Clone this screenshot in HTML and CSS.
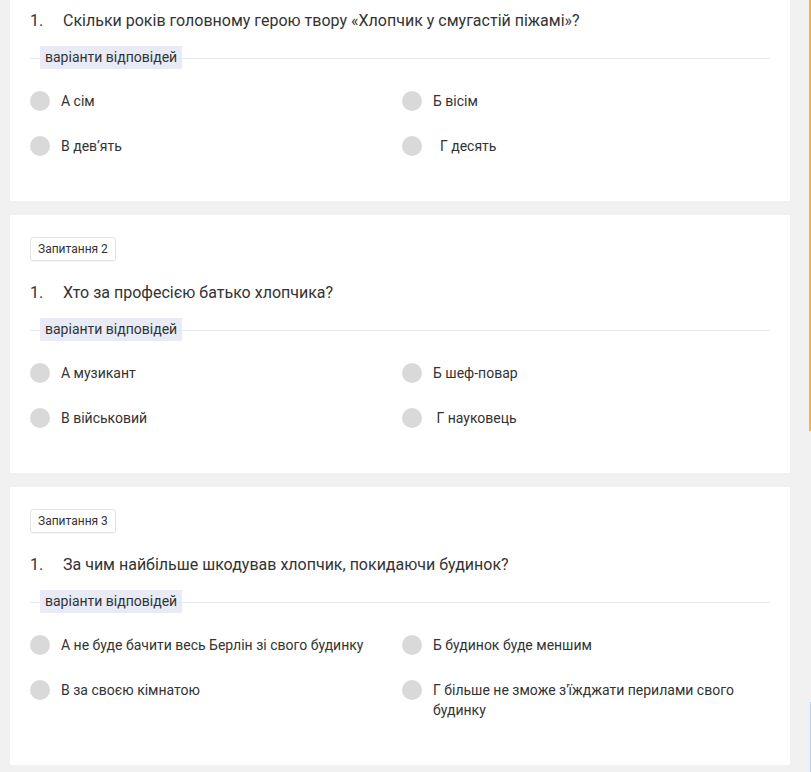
FILE: index.html
```html
<!DOCTYPE html>
<html lang="uk">
<head>
<meta charset="utf-8">
<title>Тест</title>
<link rel="stylesheet" href="styles.css">
</head>
<body>
<div class="edge edge-orange"></div>
<div class="edge edge-blue"></div>
<main class="quiz">
  <section class="card">
    <div class="badge">Запитання 1</div>
    <div class="question"><span class="num">1.</span><span>Скільки років головному герою твору «Хлопчик у смугастій піжамі»?</span></div>
    <div class="divider"><span class="label">варіанти відповідей</span></div>
    <div class="options">
      <label class="option"><span class="radio"></span><span class="text">А сім</span></label>
      <label class="option"><span class="radio"></span><span class="text">Б вісім</span></label>
      <label class="option"><span class="radio"></span><span class="text">В дев’ять</span></label>
      <label class="option"><span class="radio"></span><span class="text">&nbsp; Г десять</span></label>
    </div>
  </section>
  <section class="card">
    <div class="badge">Запитання 2</div>
    <div class="question"><span class="num">1.</span><span>Хто за професією батько хлопчика?</span></div>
    <div class="divider"><span class="label">варіанти відповідей</span></div>
    <div class="options">
      <label class="option"><span class="radio"></span><span class="text">А музикант</span></label>
      <label class="option"><span class="radio"></span><span class="text">Б шеф-повар</span></label>
      <label class="option"><span class="radio"></span><span class="text">В військовий</span></label>
      <label class="option"><span class="radio"></span><span class="text">&nbsp;Г науковець</span></label>
    </div>
  </section>
  <section class="card">
    <div class="badge">Запитання 3</div>
    <div class="question"><span class="num">1.</span><span>За чим найбільше шкодував хлопчик, покидаючи будинок?</span></div>
    <div class="divider"><span class="label">варіанти відповідей</span></div>
    <div class="options">
      <label class="option"><span class="radio"></span><span class="text">А не буде бачити весь Берлін зі свого будинку</span></label>
      <label class="option"><span class="radio"></span><span class="text">Б будинок буде меншим</span></label>
      <label class="option"><span class="radio"></span><span class="text">В за своєю кімнатою</span></label>
      <label class="option"><span class="radio"></span><span class="text">Г більше не зможе з'їжджати перилами свого будинку</span></label>
    </div>
  </section>
</main>
</body>
</html>
```
FILE: styles.css
```css
html, body {
  margin: 0;
  padding: 0;
}
body {
  background: #f1f1f1;
  font-family: Roboto, "Liberation Sans", Arial, sans-serif;
  color: #333;
  overflow: hidden;
}
.quiz {
  display: flex;
  flex-direction: column;
  gap: 14px;
  width: 780px;
  margin: -57px 0 0 10px;
}
.card {
  background: #fff;
  padding: 22px 20px 45px;
}
.badge {
  display: inline-block;
  height: 24px;
  line-height: 22px;
  box-sizing: border-box;
  padding: 0 7px;
  font-size: 12px;
  color: #333;
  border: 1px solid #e3e3e3;
  border-radius: 3px;
  box-shadow: 0 1px 1px rgba(0,0,0,0.04);
}
.question {
  display: flex;
  margin-top: 20px;
  font-size: 16px;
  line-height: 24px;
  color: #333;
}
.question .num {
  width: 33px;
  flex: none;
}
.divider {
  position: relative;
  margin-top: 13px;
  height: 23px;
  display: flex;
  align-items: center;
}
.divider::before {
  content: "";
  position: absolute;
  left: 0;
  right: 0;
  top: 12px;
  border-top: 1px solid #e8e8e8;
}
.divider .label {
  position: relative;
  margin-left: 10px;
  background: #e8eaf6;
  padding: 0 5px;
  height: 23px;
  line-height: 23px;
  font-size: 14px;
  color: #333;
}
.options {
  display: grid;
  grid-template-columns: 1fr 1fr;
  column-gap: 4px;
  row-gap: 25px;
  margin-top: 22px;
}
.option {
  display: flex;
  align-items: flex-start;
  gap: 11px;
  font-size: 14px;
  line-height: 20px;
  color: #333;
}
.radio {
  flex: none;
  width: 20px;
  height: 20px;
  border-radius: 50%;
  background: #d9d9d9;
}
.text {
  padding-right: 30px;
}
.edge {
  position: fixed;
  right: 0;
  width: 2px;
}
.edge-orange {
  top: 0;
  height: 431px;
  background: #f3b443;
}
.edge-blue {
  top: 702px;
  bottom: 0;
  width: 1px;
  background: #b9d3ec;
}
```
